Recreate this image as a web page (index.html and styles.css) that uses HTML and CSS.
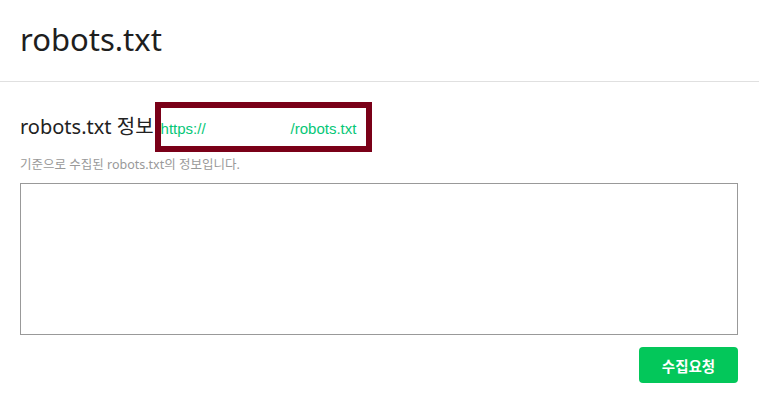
FILE: index.html
```html
<!DOCTYPE html>
<html lang="ko">
<head>
<meta charset="utf-8">
<title>robots.txt</title>
<link rel="stylesheet" href="styles.css">
</head>
<body>
<header class="page-header">
  <h1 class="page-title">robots.txt</h1>
</header>
<main class="content">
  <div class="section-head">
    <h2 class="section-title">robots.txt 정보</h2>
    <div class="url-box"><span class="url">https://<span class="redacted"></span>/robots.txt</span></div>
  </div>
  <p class="desc">기준으로 수집된 robots.txt의 정보입니다.</p>
  <textarea class="robots-text"></textarea>
  <div class="actions">
    <button class="btn-primary" type="button">수집요청</button>
  </div>
</main>
</body>
</html>
```

FILE: styles.css
```css
* { box-sizing: border-box; }
html, body { margin: 0; padding: 0; background: #fff; }
body {
  font-family: "Noto Sans", "Noto Sans CJK KR", sans-serif;
  color: #222;
  width: 759px;
  height: 416px;
  overflow: hidden;
}
.page-header {
  height: 82px;
  border-bottom: 1px solid #e0e0e0;
  padding: 17px 20px 0;
}
.page-title {
  margin: 0;
  font-weight: 400;
  font-size: 31px;
  line-height: 44px;
  color: #1e1e1e;
}
.content {
  padding: 20px 21px 0 20px;
}
.section-head {
  display: flex;
  align-items: center;
  height: 50px;
}
.section-title {
  margin: 0;
  font-weight: 400;
  font-size: 20px;
  line-height: 28px;
  color: #222;
}
.url-box {
  margin-left: 1px;
  width: 217px;
  height: 50px;
  border: 6px solid #7a0018;
  display: flex;
  align-items: center;
  padding: 2px 0 0 0;
}
.url {
  font-family: "Liberation Sans", "Noto Sans", sans-serif;
  font-size: 15px;
  color: #06c777;
  white-space: nowrap;
}
.redacted {
  display: inline-block;
  width: 85px;
}
.desc {
  margin: 4px 0 0;
  font-size: 12.5px;
  line-height: 18px;
  color: #999;
}
.robots-text {
  display: block;
  width: 718px;
  height: 152px;
  margin-top: 9px;
  border: 1px solid #999;
  border-radius: 0;
  resize: none;
  padding: 0;
  outline: none;
}
.actions {
  display: flex;
  justify-content: flex-end;
  margin-top: 12px;
}
.btn-primary {
  width: 99px;
  height: 36px;
  border: none;
  border-radius: 4px;
  background: #03c75a;
  color: #fff;
  font-family: "Noto Sans CJK KR", sans-serif;
  font-weight: 700;
  font-size: 14.5px;
  cursor: pointer;
}
```
